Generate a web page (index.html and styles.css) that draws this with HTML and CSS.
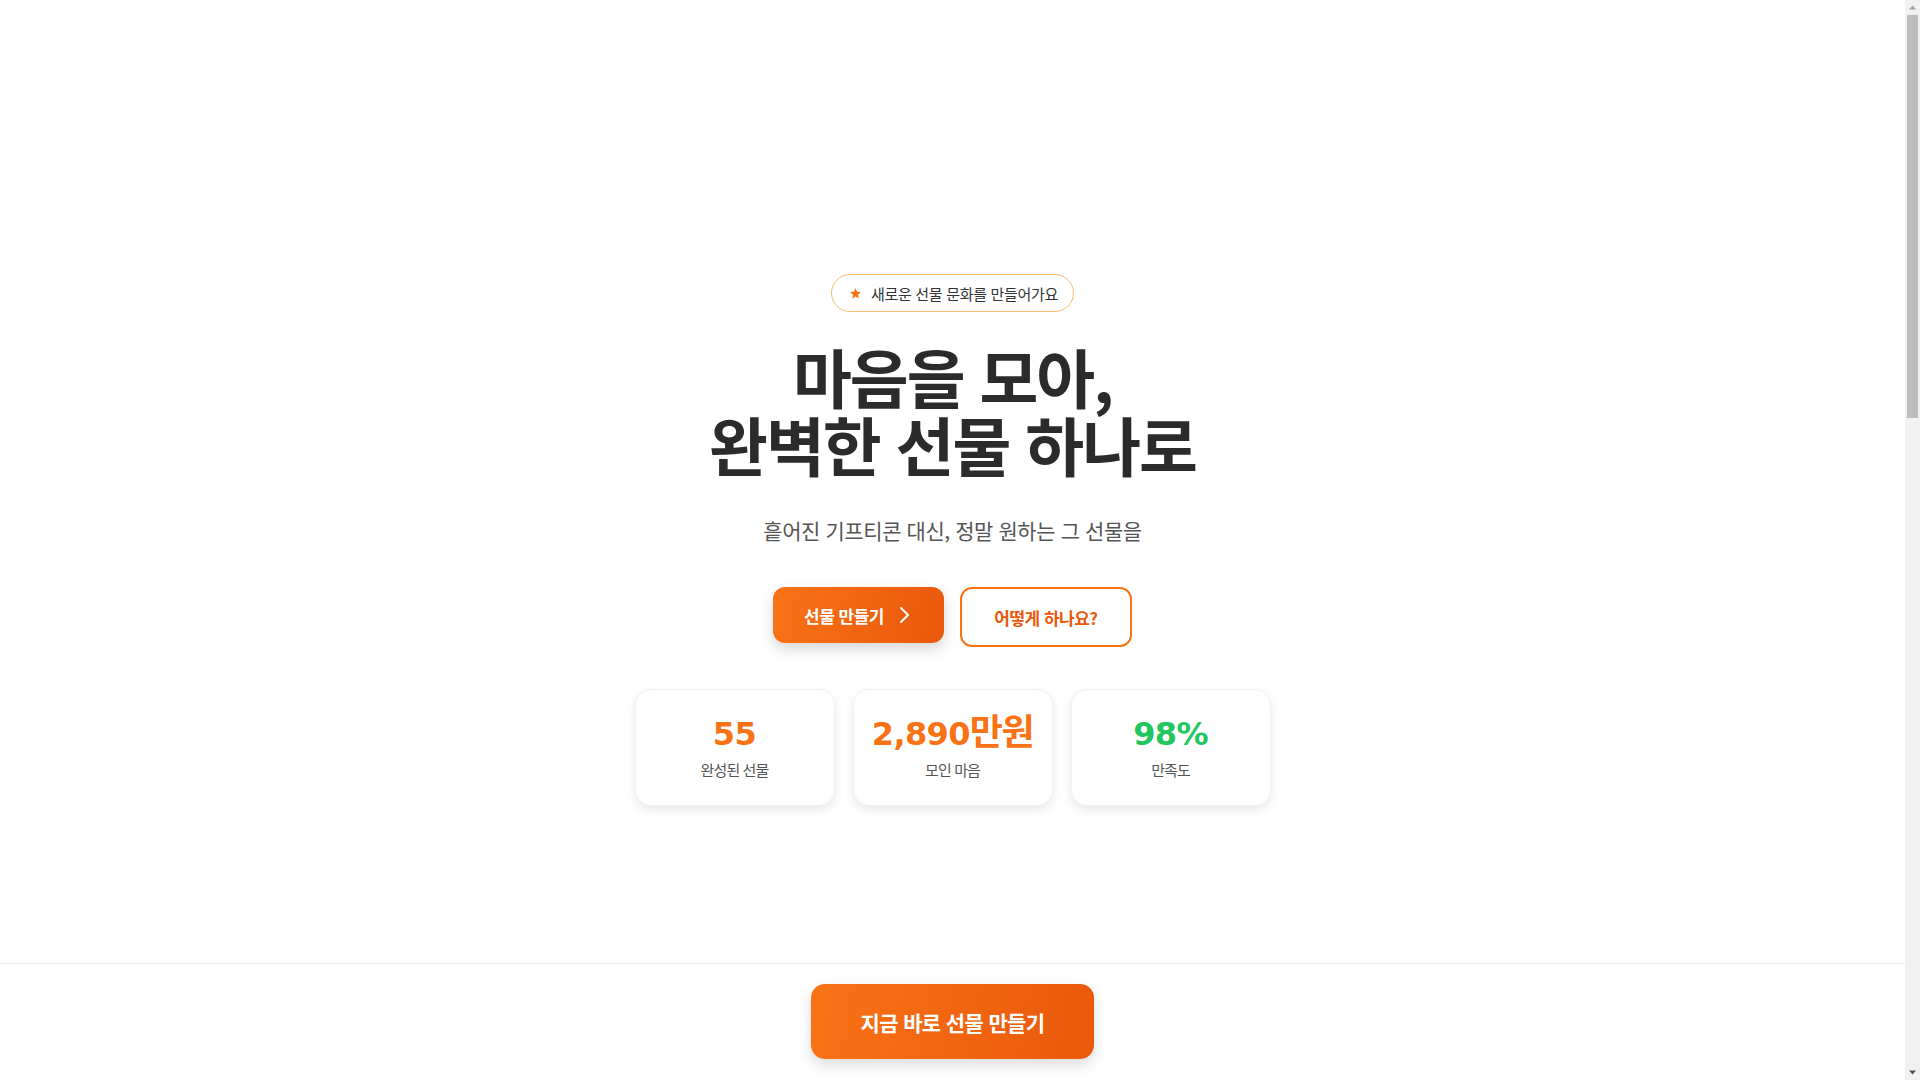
FILE: index.html
```html
<!DOCTYPE html>
<html lang="ko">
<head>
  <meta charset="UTF-8" />
  <title>마음을 모아 - 함께 만드는 선물</title>
  <link rel="stylesheet" href="styles.css">
</head>
<body>
  <div class="page">
    <section class="hero">
      <div class="badge">
        <svg class="badge-star" width="13" height="13" viewBox="0 0 24 24"><path d="M12 2l2.9 6.6 7.1.7-5.4 4.8 1.6 7-6.2-3.7-6.2 3.7 1.6-7L2 9.3l7.1-.7z" fill="currentColor"/></svg>
        <span>새로운 선물 문화를 만들어가요</span>
      </div>

      <h1>마음을 모아,<br>완벽한 선물 하나로</h1>

      <p class="subtitle">흩어진 기프티콘 대신, 정말 원하는 그 선물을</p>

      <div class="actions">
        <a href="#create" class="btn btn-primary">
          선물 만들기
          <svg width="20" height="20" viewBox="0 0 20 20"><path d="M7 3l7 7-7 7" fill="none" stroke="currentColor" stroke-width="2" stroke-linecap="round" stroke-linejoin="round"/></svg>
        </a>
        <a href="#how" class="btn btn-outline">어떻게 하나요?</a>
      </div>

      <div class="stats">
        <div class="stat">
          <div class="stat-value">55</div>
          <div class="stat-label">완성된 선물</div>
        </div>
        <div class="stat">
          <div class="stat-value">2,890<span class="unit">만원</span></div>
          <div class="stat-label">모인 마음</div>
        </div>
        <div class="stat">
          <div class="stat-value green">98%</div>
          <div class="stat-label">만족도</div>
        </div>
      </div>
    </section>

    <section class="how" id="how">
      <h2>어떻게 하나요?</h2>
      <div class="steps">
        <div class="step">
          <span class="step-num">1</span>
          <h3>선물 정하기</h3>
          <p>받는 사람이 정말 원하는 선물을 골라요</p>
        </div>
        <div class="step">
          <span class="step-num">2</span>
          <h3>링크 공유하기</h3>
          <p>친구들에게 링크를 보내 마음을 모아요</p>
        </div>
        <div class="step">
          <span class="step-num">3</span>
          <h3>함께 선물하기</h3>
          <p>모인 금액으로 하나의 선물을 전해요</p>
        </div>
      </div>
    </section>

    <section class="reviews">
      <h2>먼저 써본 사람들의 이야기</h2>
      <div class="review-list">
        <div class="review">"기프티콘 열 개보다 훨씬 의미 있었어요."</div>
        <div class="review">"생일에 갖고 싶던 노트북을 받았어요!"</div>
        <div class="review">"모으는 과정도 재밌고 간편했어요."</div>
      </div>
    </section>

    <footer class="footer">
      <p>© 마음을 모아. 함께 만드는 선물.</p>
    </footer>

    <div class="bottom-bar">
      <a href="#create" class="btn-cta">지금 바로 선물 만들기</a>
    </div>
  </div>

  <!-- 스크롤바 -->
  <div class="scrollbar" aria-hidden="true">
    <svg class="sb-btn" width="15" height="15" viewBox="0 0 15 15"><path d="M4 9.5h7L7.5 5.5z" fill="#a3a3a3"/></svg>
    <div class="sb-track"><div class="sb-thumb"></div></div>
    <svg class="sb-btn" width="15" height="15" viewBox="0 0 15 15"><path d="M4 5.5h7L7.5 9.5z" fill="#505050"/></svg>
  </div>
</body>
</html>
```

FILE: styles.css
```css
:root {
  --orange: #f97316;
  --orange-dark: #ea580c;
  --green: #22c55e;
  --text: #2b2b2b;
  --muted: #555;
  --line: #ececec;
}

* {
  box-sizing: border-box;
}

html,
body {
  height: 100%;
  overflow: hidden;
}

body {
  margin: 0;
  display: flex;
  font-family: 'Noto Sans CJK KR', 'Noto Sans', sans-serif;
  color: var(--text);
  background: #fff;
}

a {
  text-decoration: none;
}

.page {
  flex: 1;
  height: 100vh;
  overflow-y: auto;
}

.scrollbar {
  width: 15px;
  height: 100vh;
  display: flex;
  flex-direction: column;
  background: #f1f1f1;
}

.sb-btn {
  display: block;
  flex-shrink: 0;
}

.sb-track {
  flex: 1;
}

.sb-thumb {
  height: 403px;
  margin: 0 2px;
  background: #bdbdbd;
}

.hero {
  min-height: 100vh;
  display: flex;
  flex-direction: column;
  align-items: center;
  justify-content: center;
  text-align: center;
}

.badge {
  display: inline-flex;
  align-items: center;
  gap: 9px;
  height: 38px;
  padding: 0 15px 0 17px;
  border: 1px solid #fdba74;
  border-radius: 999px;
  font-size: 15px;
  letter-spacing: -0.02em;
  color: #333;
}

.badge-star {
  color: var(--orange);
}

h1 {
  margin: 29px 0 0;
  font-size: 64px;
  line-height: 68px;
  font-weight: 700;
  letter-spacing: -2px;
  color: var(--text);
}

.subtitle {
  margin: 38px 0 0;
  font-size: 21px;
  line-height: 30px;
  letter-spacing: -0.02em;
  color: var(--muted);
}

.actions {
  display: flex;
  align-items: flex-start;
  gap: 16px;
  margin-top: 42px;
}

.btn {
  display: inline-flex;
  align-items: center;
  justify-content: center;
  border-radius: 12px;
  font-size: 17px;
  font-weight: 700;
  letter-spacing: -0.03em;
}

.btn-primary {
  height: 56px;
  gap: 10px;
  padding: 0 30px 0 31px;
  color: #fff;
  background: linear-gradient(100deg, var(--orange), var(--orange-dark));
  box-shadow: 0 6px 14px rgba(0, 0, 0, 0.16);
}

.btn-outline {
  width: 172px;
  height: 60px;
  color: var(--orange-dark);
  background: #fff;
  border: 2px solid var(--orange);
}

.stats {
  display: grid;
  grid-template-columns: repeat(3, 200px);
  gap: 18px;
  margin-top: 42px;
}

.stat {
  height: 117px;
  padding-top: 24px;
  border: 1px solid #f2f2f2;
  border-radius: 16px;
  background: #fff;
  box-shadow: 0 4px 10px rgba(0, 0, 0, 0.09);
}

.stat-value {
  font-family: 'DejaVu Sans', 'Noto Sans CJK KR', sans-serif;
  font-size: 32px;
  line-height: 40px;
  font-weight: 700;
  letter-spacing: -0.02em;
  color: var(--orange);
}

.stat-value .unit {
  font-family: 'Noto Sans CJK KR', sans-serif;
  font-size: 36px;
  line-height: 0;
  letter-spacing: -0.04em;
}

.stat-value.green {
  color: var(--green);
}

.stat-label {
  margin-top: 5px;
  font-size: 15px;
  line-height: 22px;
  letter-spacing: -0.06em;
  color: var(--muted);
}

/* 아래 섹션들 */
.how,
.reviews {
  padding: 120px 20px;
  text-align: center;
}

.how {
  min-height: 860px;
  background: #fff7ed;
}

.reviews {
  min-height: 720px;
}

h2 {
  margin: 0 0 48px;
  font-size: 36px;
  letter-spacing: -0.03em;
}

.steps,
.review-list {
  display: flex;
  justify-content: center;
  gap: 24px;
}

.step,
.review {
  width: 280px;
  padding: 32px 24px;
  border-radius: 16px;
  background: #fff;
  box-shadow: 0 4px 10px rgba(0, 0, 0, 0.06);
}

.step-num {
  display: inline-block;
  width: 36px;
  height: 36px;
  line-height: 36px;
  border-radius: 50%;
  background: var(--orange);
  color: #fff;
  font-weight: 700;
}

.step h3 {
  margin: 16px 0 8px;
  font-size: 20px;
}

.step p,
.review {
  margin: 0;
  color: var(--muted);
  font-size: 15px;
  line-height: 1.6;
}

.footer {
  padding: 40px 20px 40px;
  text-align: center;
  color: #999;
  font-size: 14px;
  border-top: 1px solid var(--line);
}

.bottom-bar {
  position: sticky;
  bottom: 0;
  display: flex;
  justify-content: center;
  padding: 20px 0 21px;
  background: #fff;
  border-top: 1px solid var(--line);
}

.btn-cta {
  display: inline-flex;
  align-items: center;
  justify-content: center;
  width: 283px;
  height: 75px;
  border-radius: 14px;
  font-size: 21px;
  font-weight: 700;
  letter-spacing: -0.03em;
  color: #fff;
  background: linear-gradient(100deg, var(--orange), var(--orange-dark));
  box-shadow: 0 6px 14px rgba(0, 0, 0, 0.14);
}
```
